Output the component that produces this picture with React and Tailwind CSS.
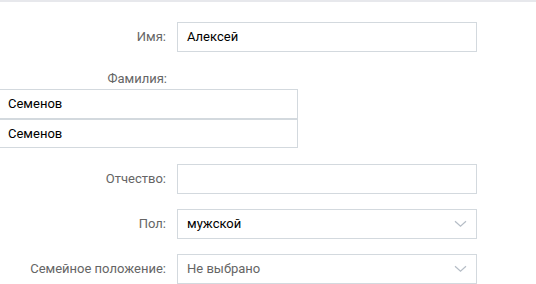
import React from "react";

function Chevron() {
  return (
    <svg width="13" height="8" viewBox="0 0 13 8" className="shrink-0">
      <path d="M1 1.2 L6.5 6.2 L12 1.2" fill="none" stroke="#b5bdc6" strokeWidth="1.2" />
    </svg>
  );
}

function Row({ label, children, className = "" }) {
  return (
    <div className={"flex items-center " + className}>
      <div className="w-[166px] text-right text-[#656565] leading-[16px]">{label}</div>
      <div className="ml-[11px] w-[300px]">{children}</div>
    </div>
  );
}

function Input({ value, placeholder }) {
  return (
    <div className="h-[30px] border border-[#d3d9de] bg-white flex items-center pl-[9px] text-black">
      {value ? value : <span className="text-[#777]">{placeholder}</span>}
    </div>
  );
}

function Select({ value, muted }) {
  return (
    <div className="h-[30px] border border-[#d3d9de] bg-white flex items-center justify-between pl-[9px] pr-[9px]">
      <span className={muted ? "text-[#656565]" : "text-black"}>{value}</span>
      <Chevron />
    </div>
  );
}

export default function App() {
  return (
    <div
      className="w-[536px] h-[284px] overflow-hidden bg-white border-t-2 border-[#e7e8ec] text-[13px]"
      style={{ fontFamily: "Roboto, 'Noto Sans', sans-serif" }}
    >
      <Row label="Имя:" className="mt-[20px]">
        <Input value="Алексей" />
      </Row>
      <div className="mt-[19px] w-[167px] text-right text-[#656565] leading-[16px]">Фамилия:</div>
      <div className="mt-[2px] ml-[-1px] w-[299px] flex flex-col">
        <div className="h-[30px] border border-[#d3d9de] flex items-center pl-[8px] text-black">Семенов</div>
        <div className="h-[30px] border border-[#d3d9de] border-t-[#d3d9de] flex items-center pl-[8px] text-black -mt-px border-t-2">Семенов</div>
      </div>
      <Row label="Отчество:" className="mt-[16px]">
        <Input value="" />
      </Row>
      <Row label="Пол:" className="mt-[15px]">
        <Select value="мужской" />
      </Row>
      <Row label="Семейное положение:" className="mt-[15px]">
        <Select value="Не выбрано" muted />
      </Row>
    </div>
  );
}
